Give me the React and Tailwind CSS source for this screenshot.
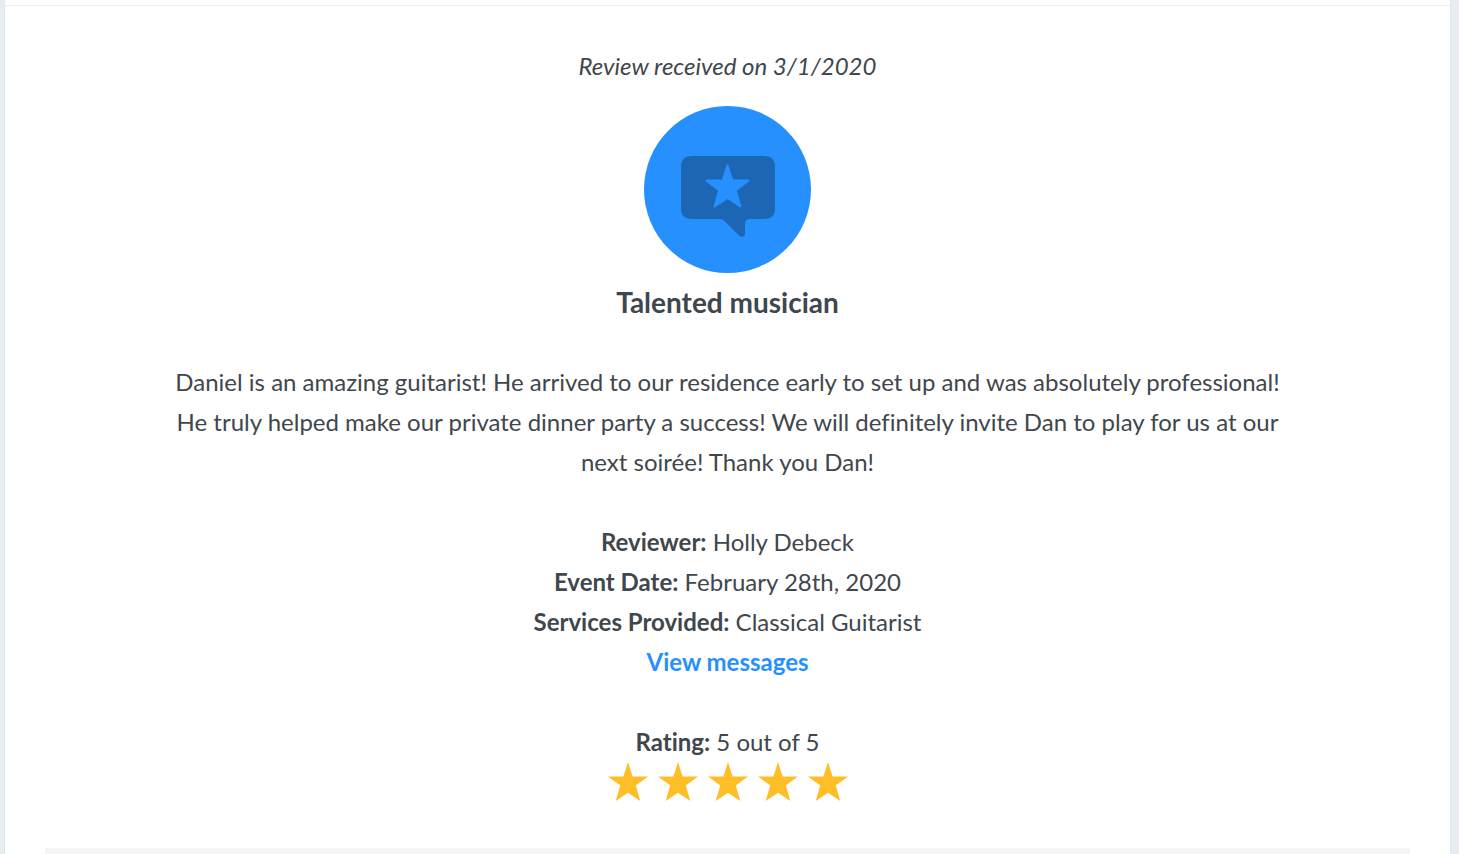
const STAR = "M20 0 L24.6 14.4 L40 14.4 L27.8 23.6 L32.3 39 L20 30.8 L7.7 39 L12.2 23.6 L0 14.4 L15.4 14.4 Z";

function Detail({ label, children }) {
  return (
    <p>
      <strong className="font-bold">{label}</strong> {children}
    </p>
  );
}

export default function App() {
  return (
    <div className="min-h-screen bg-[#e9edf1] pl-1 pr-2 font-['Lato',sans-serif] text-[#3f474d]">
      <main className="flex min-h-screen flex-col border-x border-[#e2e7eb] bg-white">
        <div className="h-1.5 border-b border-[#ebedef]" />
        <article className="mx-10 flex grow flex-col border-b-6 border-[#f5f5f5] px-30 pt-10 text-center text-[24px] leading-10 [font-variant-ligatures:none]">
          <p className="italic">Review received on 3/1/2020</p>
          <svg className="mx-auto mt-5 size-[167px]" viewBox="0 0 167 167" aria-hidden="true">
            <circle cx="83.5" cy="83.5" r="83.5" fill="#2690ff" />
            <path fill="#1c66b3" d="M48 50H120Q131 50 131 61V102Q131 113 120 113H105Q101 113.5 101 118V128Q100.5 131.5 97 130.5Q95.5 130 94 128.5L81 115.5Q79 113 76 113H48Q37 113 37 102V61Q37 50 48 50Z" />
            <path fill="#2690ff" stroke="#2690ff" strokeWidth="2" strokeLinejoin="round" transform="translate(62.5 59.5) scale(1.05)" d={STAR} />
          </svg>
          <h1 className="mt-[9px] text-[28px] font-bold">Talented musician</h1>
          <p className="mt-10">
            Daniel is an amazing guitarist! He arrived to our residence early to set up and was absolutely professional! He truly helped make our private dinner party a success! We will definitely invite Dan to play for us at our next soirée! Thank you Dan!
          </p>
          <div className="mt-10">
            <Detail label="Reviewer:">Holly Debeck</Detail>
            <Detail label="Event Date:">February 28th, 2020</Detail>
            <Detail label="Services Provided:">Classical Guitarist</Detail>
            <a href="#messages" className="font-bold text-[#2690ff]">View messages</a>
          </div>
          <div className="mt-10">
            <Detail label="Rating:">5 out of 5</Detail>
            <div className="flex justify-center gap-2.5">
              {[1, 2, 3, 4, 5].map((n) => (
                <svg key={n} className="size-10" viewBox="0 0 40 40" fill="#febe28" aria-hidden="true">
                  <path d={STAR} />
                </svg>
              ))}
            </div>
          </div>
        </article>
      </main>
    </div>
  );
}
